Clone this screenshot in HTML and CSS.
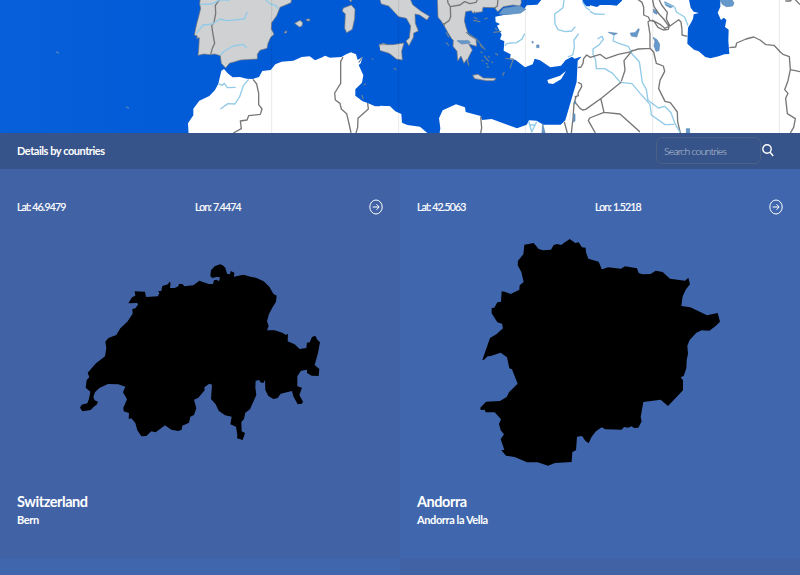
FILE: index.html
```
<!DOCTYPE html>
<html lang="en">
<head>
<meta charset="utf-8">
<title>Countries</title>
<link rel="stylesheet" href="styles.css">
</head>
<body>
<section class="map">
<svg viewBox="0 0 800 133" width="800" height="133">
  <defs><linearGradient id="sea"><stop offset="0" stop-color="#075fd9"/><stop offset=".35" stop-color="#005ad6"/><stop offset="1" stop-color="#005ad6"/></linearGradient></defs>
  <rect width="800" height="133" fill="url(#sea)"/>
  <!-- western Mediterranean -->
  <svg x="180" y="0" width="210" height="133" viewBox="0 0 630 399">
    <path class="eu" d="M61 -5L59 12L62 25L56 50L50 72L43 105L52 108L50 115L58 113L56 150L54 166L72 162L90 164L104 162L121 167L124 190L137 204L148 190L165 185L182 180L215 178L232 177L232 163L240 151L261 145L264 130L272 112L282 103L274 87L275 68L290 47L300 22L333 8L335 -5Z"/>
    <path class="eu" d="M490 24L514 15L525 28L524 55L517 88L500 98L494 85L496 42L487 33ZM504 -5L516 -5L513 6ZM598 -5L608 6L635 12L635 -5ZM597 134L611 130L630 139L635 165L616 152L600 145ZM344 70L360 61L368 68L366 78L358 81ZM378 58L389 57L389 63L381 62ZM312 97L321 92L318 100Z"/>
    <path class="land" d="M26 405L24 370L40 346L40 326L58 302L88 288L105 270L115 251L124 212L132 207L143 220L158 232L180 231L200 236L218 237L237 231L247 213L272 210L286 193L305 185L340 182L365 171L389 169L405 181L427 172L435 167L450 173L484 171L500 162L513 157L528 163L533 180L548 171L542 190L536 195L550 226L546 248L526 268L526 287L548 304L563 309L585 319L632 319L640 405Z"/>
    <path class="coast" d="M548 171L536 188M546 285l3 12M575 176l5 2M551 254l7-3"/>
    <path class="line" d="M120 -3L106 16L107 40L102 68L95 77L99 103L104 130L97 145L92 163M219 238L230 252L236 280L236 314L246 327L241 343L206 347L201 360L181 363L184 386L160 399M489 171L482 185L482 250L464 279L466 300L480 310L484 327L500 341L508 375L513 399M563 309L565 327L534 355L533 382L528 399"/>
    <path class="river" d="M60 13L95 12L106 7L117 0L150 0M49 101L69 75L97 72L121 57L140 62L193 57L202 35M121 165L133 153L160 138L189 133L200 143M257 0L272 12L288 17L294 26M116 252L127 256L133 250L142 263L167 262M206 238L190 257L179 290L165 312L144 311L121 327"/>
    <path class="grid" d="M275 0V399"/>
  </svg>
  <!-- Italy, Greece, Anatolia and Libya -->
  <svg x="380" y="0" width="210" height="133" viewBox="0 0 630 399">
    <path class="eu" d="M-2 -5L4 12L26 18L56 50L79 55L92 78L88 114L78 123L87 137L100 112L101 99L115 93L106 70L105 42L119 45L141 60L148 49L122 33L98 14L90 -5ZM-2 134L38 134L72 129L65 153L67 180L49 177L28 160L-2 151ZM172 -5L174 52L183 62L194 80L204 98L215 116L220 121L219 139L231 154L233 183L243 168L252 190L260 178L266 198L263 178L268 167L277 150L266 132L290 139L288 118L266 105L258 82L253 62L257 35L274 32L278 39L307 35L309 22L344 23L353 35L370 20L400 15L420 19L424 8L423 -5Z"/>
    <path class="eu" d="M278 226L294 223L310 234L348 235L342 242L320 242L284 236Z"/>
    <path class="land" d="M346 50L382 43L430 31L440 16L472 14L488 -5L635 -5L635 182L602 170L584 176L576 170L557 180L543 197L511 202L480 181L464 176L458 193L435 202L406 179L390 178L392 163L371 152L373 124L360 118L365 104L351 77L360 72L347 66ZM502 240L540 227L558 213L543 238L519 252L505 250ZM-3 317L30 319L46 334L64 342L66 368L82 375L120 380L142 399L178 405L181 385L177 355L188 331L228 313L255 322L257 336L302 348L306 360L335 357L411 385L440 374L447 361L470 362L490 374L542 374L556 361L581 275L590 245L593 182L606 169L640 170L640 405L-3 405Z"/>
    <path fill="#005ad6" d="M607 -3L609 10L620 19L635 19L635 -3Z"/>
    <path class="lake" d="M357 42L370 25L418 17L437 28L422 39L379 44ZM231 122L266 122L271 129L245 132ZM470 135h7v8h-7ZM456 123l5 4l-4 3ZM488 370l7 29h-9Z"/>
    <path class="coast" d="M198 97l9 15m-9 15l9 10M282 34l5 6m-6 12l11 5m21 0l10-3m22 31l7 5m-12 7l24-3M258 97L289 117L316 150M279 61l22 4M300 135l10 10m-9 11l7 2m4 9l6 7m-14 7l7 3m6-10l10 10m-10 6l7 3m1-25l4 5m5 12l5 3m-19 12l7 2m19-42l8 6M376 175L400 177L390 205M368 227l5-12M41 205l8 4M189 69l5 10"/>
    <path class="line" d="M202 -5L204 9L211 20L212 50L207 62L190 74M211 20L240 15L254 5L270 11L288 7L292 0M354 -5L352 18L344 24M302 350L305 384L302 399"/>
    <path class="river" d="M374 137L382 130L410 128L426 117L434 101M552 0L549 23L524 42L525 72L534 89L555 95L575 93L586 80M607 5L619 24L635 34M596 101L582 120L583 143L578 165L563 171M446 363L455 396L470 365M450 375L466 375"/>
    <path class="grid" d="M56 0V399M436 0V399"/>
  </svg>
  <!-- Middle East and Caspian -->
  <svg x="590" y="0" width="210" height="133" viewBox="0 0 630 399">
    <rect width="630" height="399" fill="#fff"/>
    <path fill="#005ad6" d="M-3 -5L-3 15L21 21L30 15L61 15L80 17L96 2L96 -5ZM296 -5L302 23L311 35L327 39L311 43L309 56L303 68L294 83L292 131L312 149L326 154L346 171L361 175L386 169L403 163L418 162L415 122L416 89L405 81L409 59L401 53L393 60L383 38L391 20L391 -5Z"/>
    <path class="lake" d="M389 -2L397 13L409 20L428 18L432 9L425 -2ZM121 99L135 98L145 86L148 88L140 111L124 108ZM189 112L201 119L209 133L207 152L198 154L192 137L195 124ZM190 27L203 37L200 43L191 38ZM55 97L82 100L72 105ZM224 5L252 19L241 23L227 16ZM289 386h10v14h-10Z"/>
    <path class="line" d="M142 -3L156 7L161 22L161 45L175 51L180 61L174 66L180 103L180 145L191 156L199 190L220 198L224 214L210 241L206 266L225 304L241 308L262 336L263 365L271 399M180 61L192 64L204 82L220 90L235 88L237 79L221 57L207 42L192 20L188 0M207 -2L215 15L232 37L229 57L240 78L266 59L273 66L276 90L276 105L292 109M240 78L224 85L210 73L186 60M180 145L145 147L120 155M128 150L102 182L105 211L94 244M418 143L437 141L440 129L468 117L491 111L510 120L528 134L552 136L571 156L579 163L598 170L601 209L630 215M601 209L594 242L584 269L594 280L587 295L592 341L616 356L611 382L601 399M586 3L601 3L606 -3M614 -3L630 14"/>
    <path class="river" d="M-2 33L14 42L44 43M22 117L36 109L40 118L28 134L9 147L9 162L17 180L19 206L44 206L68 220L91 247L126 251L151 281L180 313L184 345L225 374L252 373M72 105L69 123L89 131L115 139L126 162L148 185L157 247L169 268L174 301L205 324L224 319L243 338L255 371L270 397M223 9L254 21L259 36L284 51L294 77"/>
    <path class="grid" d="M188 0V399M568 0V399"/>
  </svg>
  <!-- Levant borders -->
  <svg x="550" y="50" width="90" height="83" viewBox="0 0 270 249">
    <path class="line" d="M84 53L93 51L99 40L101 26L110 15L121 22L150 13L168 26L205 13L245 5M84 97L94 102L95 110L84 130L85 137L74 141M74 153L78 160L90 175L98 180L107 178L155 144L214 96M152 144L162 187L119 204L115 212L136 249M162 187L210 192L270 246M78 141L72 160L69 205L64 249M43 216L52 249"/>
    <path class="lake" d="M71 192h4v21l-5 3ZM74 153h2v9h-2Z"/>
    <path d="M63 180L59 210" fill="none" stroke="#d4d9dd" stroke-width="2"/>
  </svg>
  <path d="M56 52l3 1M126 107l3 1" stroke="#477fc0" stroke-width="1.5"/>
</svg>
</section>
<header class="bar">
  <h1>Details by countries</h1>
  <form class="search">
    <input type="text" placeholder="Search countries" aria-label="Search countries">
    <svg class="glass" viewBox="0 0 12 13" width="12" height="13"><circle cx="5" cy="5" r="4.2"/><path d="M8.1 8.2L11.2 12"/></svg>
  </form>
</header>
<main class="cards">
  <article class="card">
    <div class="coords"><span>Lat: 46.9479</span><span>Lon: 7.4474</span>
      <svg class="go" viewBox="0 0 14 16" width="14" height="16"><ellipse cx="7" cy="8" rx="6.2" ry="7"/><path d="M3.7 8H10M7.5 5.3L10.2 8L7.5 10.7"/></svg></div>
    <svg class="shape" viewBox="0 0 240 240" width="240" height="240">
      <path transform="translate(-10 22) scale(.333333)" d="M30 458L35 449L52 445L57 431L61 410L47 398L50 375L58 367L53 353L78 325L105 304L109 280L106 260L115 249L139 240L151 220L172 200L188 176L187 162L196 160L204 149L202 144L175 145L186 127L196 122L194 109L225 110L228 126L264 124L268 115L265 108L274 108L277 93L294 88L298 80L302 84L300 99L314 99L325 94L327 86L339 88L342 94L370 91L388 77L407 84L417 87L429 87L432 76L440 74L447 79L450 67L440 66L426 69L421 62L423 46L434 34L450 28L458 31L466 38L471 56L480 58L482 48L493 53L492 65L520 59L545 66L558 68L581 79L598 95L610 116L620 122L618 140L607 158L597 177L591 198L596 213L591 226L614 226L637 233L648 240L654 236L653 259L674 268L689 282L709 279L711 263L719 262L726 246L736 242L742 254L750 262L744 294L734 330L748 342L746 363L725 362L711 354L711 344L693 347L682 364L682 394L696 398L688 420L699 440L696 446L683 448L670 424L666 408L632 416L623 429L610 432L595 423L586 405L585 375L580 384L571 382L568 375L557 377L556 397L559 420L540 463L526 473L522 492L514 501L515 529L525 534L518 555L501 550L502 540L498 515L481 508L485 485L465 481L446 467L437 448L423 432L426 389L418 386L403 397L404 406L385 428L372 434L379 460L372 480L361 485L357 503L337 512L335 524L325 528L304 524L285 511L257 532L244 529L229 543L214 544L202 526L196 504L184 490L176 492L177 474L161 469L160 458L171 433L159 412L166 395L145 388L114 387L88 399L75 412L70 427L74 436L84 440L81 448L70 457L62 465L37 469Z"/></svg>
    <h2>Switzerland</h2><p>Bern</p>
  </article>
  <article class="card alt">
    <div class="coords"><span>Lat: 42.5063</span><span>Lon: 1.5218</span>
      <svg class="go" viewBox="0 0 14 16" width="14" height="16"><ellipse cx="7" cy="8" rx="6.2" ry="7"/><path d="M3.7 8H10M7.5 5.3L10.2 8L7.5 10.7"/></svg></div>
    <svg class="shape" viewBox="0 0 240 240" width="240" height="240">
      <path transform="translate(-5 2) scale(.333333)" d="M22 375L45 309L64 298L84 280L81 266L67 262L50 235V219L58 218L67 202L78 200L80 169L89 170L107 177L133 164L134 151L146 141L139 111L128 91L129 77L145 58L148 29L176 24L191 42L204 46L228 44L236 30L246 27L258 30L284 12L301 24L311 22L321 37L332 38L333 52L340 71L371 80L380 102L382 103L399 97L438 101L450 94L486 100L491 114L502 118L527 117L542 107L563 111L585 131L630 137L640 128L645 148L633 163L623 184L619 213L646 217L696 241L728 234L735 260L722 273L703 287L680 286L664 293L644 315L637 332L639 356L635 376L634 400L626 423L617 427L624 436V466L579 513L557 494L505 501L497 546L500 559L490 578L477 579L470 574L459 578L447 576L440 584L391 583L380 577L363 589L350 605L341 625L331 617L321 603L306 605L303 646L292 651L290 681L240 684L219 692L188 682L156 682L119 666L93 662L79 646L88 644L77 613L87 598L77 586L72 567L78 553L59 532L32 532L29 524L17 525L16 518L33 500L75 498L95 486L102 472L128 446L111 403L103 400L96 367L77 353L47 363L38 364L27 374Z"/></svg>
    <h2>Andorra</h2><p>Andorra la Vella</p>
  </article>
  <div class="next alt"></div><div class="next"></div>
</main>
</body>
</html>
```
FILE: styles.css
```
* { box-sizing: border-box; }
body { margin: 0; width: 800px; height: 575px; overflow: hidden; font-family: Lato, sans-serif; color: #fff; background: #4163a5; }
svg { display: block; }
.map { height: 133px; }
.eu { fill: #d0d1d3; stroke: #777; stroke-width: 2; }
.land { fill: #fff; }
.lake { fill: #6599cc; stroke: #5a87b3; stroke-width: 2; }
.coast { fill: none; stroke: #6b8190; stroke-width: 3.5; }
.line { fill: none; stroke: #777; stroke-width: 4; stroke-linejoin: round; }
.river { fill: none; stroke: #91cbe8; stroke-width: 4; stroke-linejoin: round; }
.grid { stroke: #000; stroke-opacity: .09; stroke-width: 3; }
.bar { height: 36px; padding: 0 26px 0 17px; display: flex; align-items: center; justify-content: space-between; background: #365489; }
h1 { margin: 0; font-size: 11px; line-height: 14px; font-weight: 700; letter-spacing: -.45px; }
.search { display: flex; align-items: center; gap: 1px; }
.glass { margin-top: -2px; }
input { width: 105px; height: 27px; padding: 0 7px; border: 1px solid #496087; border-radius: 6px; background: transparent; font: 300 10.5px Lato, sans-serif; letter-spacing: -.8px; margin-top: -1px; }
input::placeholder { color: #c0c9da; opacity: 1; }
.glass, .go { fill: none; stroke: #fff; stroke-width: 1.4; }
.go { stroke-width: 1; margin-left: auto; }
.cards { display: grid; grid-template-columns: 400px 400px; grid-template-rows: 390px 16px; }
.card { padding: 30px 17px 0; background: #4163a5; }
.card.alt, .next.alt { background: #4067ad; }
.next { background: #4163a5; }
.coords { display: flex; align-items: center; height: 16px; font-size: 10.5px; letter-spacing: -.85px; }
.coords span { letter-spacing: -.7px; -webkit-text-stroke: .2px #fff; }
.coords span { letter-spacing: -.85px; }
.coords span:first-child { width: 178px; }
.shape { margin: 18px auto 0 63px; }
h2 { margin: 20px 0 0; font-size: 14.5px; line-height: 18px; font-weight: 700; letter-spacing: -.45px; }
p { margin: 2px 0 0; font-size: 11px; line-height: 14px; font-weight: 700; letter-spacing: -.4px; }
```
